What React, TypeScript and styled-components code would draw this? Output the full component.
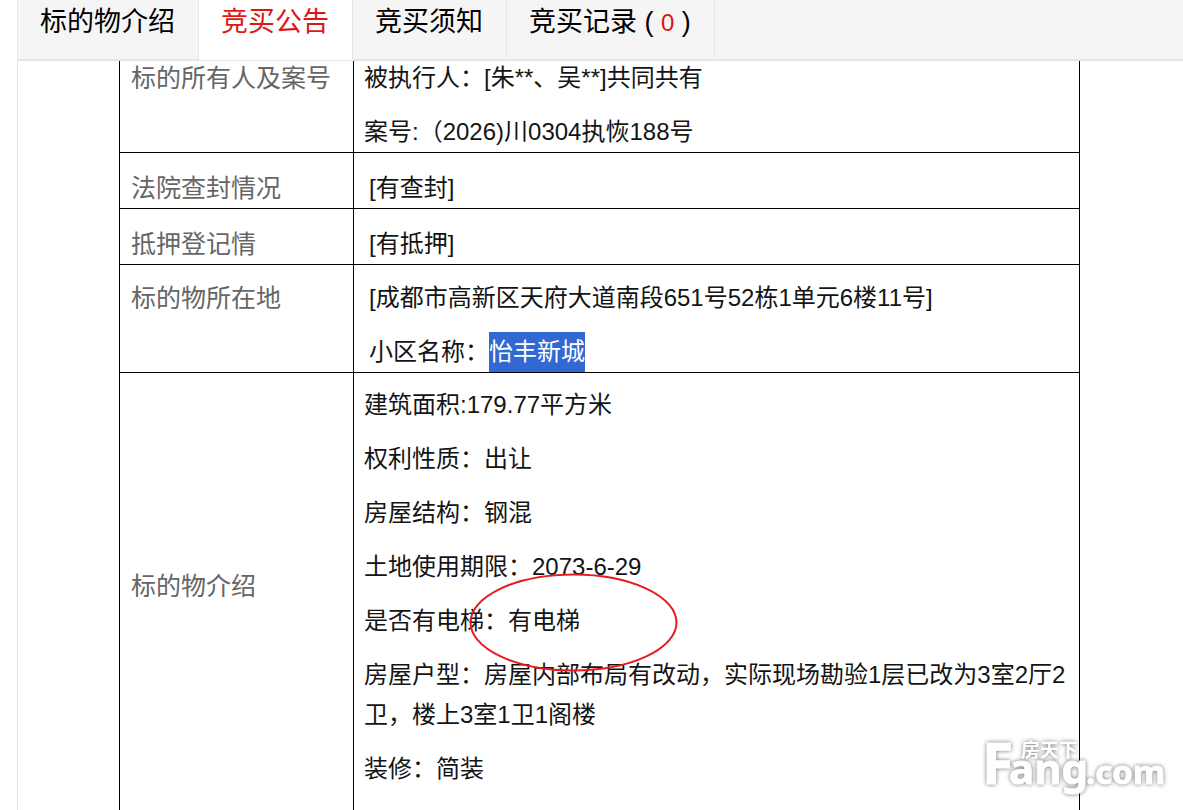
import React, { useState } from "react";
import styled, { createGlobalStyle, css } from "styled-components";

const sans = '"Liberation Sans", "Noto Sans CJK SC", sans-serif';
const cjk = '"Noto Sans CJK SC", sans-serif';

const GlobalStyle = createGlobalStyle`
  *, *::before, *::after { box-sizing: border-box; }
  body { margin: 0; background: #fff; font-family: ${sans}; }
`;

const Page = styled.div`
  position: relative;
  display: flex;
  flex-direction: column;
  height: 100vh;
  padding-left: 17px;
  overflow: hidden;
`;

const TabBar = styled.div`
  display: flex;
  flex: none;
  background: #f5f5f5;
  border-left: 1px solid #e5e5e5;
`;

const Tab = styled.button<{ $active: boolean }>`
  margin: 0;
  padding: 0 23px 19px 22px;
  border: 0;
  border-right: 1px solid #e5e5e5;
  border-bottom: 1px solid ${(p) => (p.$active ? "#fff" : "#e5e5e5")};
  background: ${(p) => (p.$active ? "#fff" : "#f5f5f5")};
  color: ${(p) => (p.$active ? "#dd1712" : "#000")};
  font-family: ${cjk};
  font-size: 27px;
  line-height: 40px;
  white-space: pre;
  cursor: pointer;
`;

const TabFiller = styled.div`
  flex: 1;
  border-bottom: 1px solid #e5e5e5;
`;

const Tally = styled.span`
  font-family: ${sans};
  line-height: 1;
`;

const Count = styled.span`
  color: #dd1712;
  font-size: 24px;
`;

const Content = styled.main`
  flex: 1;
  min-height: 0;
  overflow: hidden;
  border-top: 1px solid #e5e5e5;
  border-left: 1px solid #e5e5e5;
`;

const NoticeTable = styled.table`
  width: calc(100% - 204px);
  margin: -3px 103px 0 101px;
  table-layout: fixed;
  border-collapse: separate;
  border-spacing: 0;
  border-left: 1px solid #000;
`;

const cell = css`
  border-right: 1px solid #000;
  border-bottom: 1px solid #000;
  line-height: 40px;
  text-align: left;
  font-weight: 400;
`;

const LabelCell = styled.th<{ $top: number; $middle?: boolean }>`
  ${cell}
  width: 234px;
  padding: ${(p) => p.$top}px 0 ${(p) => (p.$middle ? 56 : 0)}px 11px;
  color: #666;
  font-size: 25px;
  vertical-align: ${(p) => (p.$middle ? "middle" : "top")};
`;

const ValueCell = styled.td<{ $top: number; $indent?: boolean }>`
  ${cell}
  padding: ${(p) => p.$top}px 10px 0 ${(p) => (p.$indent ? 15 : 10)}px;
  color: #141414;
  font-size: 24px;
  vertical-align: top;
`;

const Line = styled.p`
  position: relative;
  margin: 0;
  & + & { margin-top: 14px; }
`;

const Selected = styled.mark`
  display: inline-block;
  background: #3367d1;
  color: #fff;
`;

const Circle = styled.svg`
  position: absolute;
  z-index: 1;
  left: 105px;
  top: -28px;
  width: 209px;
  height: 99px;
  pointer-events: none;
`;

const Watermark = styled.svg`
  position: absolute;
  z-index: 2;
  right: 8px;
  bottom: 4px;
  width: 200px;
  height: 76px;
  pointer-events: none;
  filter: drop-shadow(0 0 2px rgba(0, 0, 0, 0.55));
`;

const tabs = ["标的物介绍", "竞买公告", "竞买须知", "竞买记录"];

type Row = {
  label: string;
  top: number;
  middle?: boolean;
  indent?: boolean;
  lines: React.ReactNode[];
};

const rows: Row[] = [
  {
    label: "标的所有人及案号",
    top: 0,
    lines: ["被执行人：[朱**、吴**]共同共有", "案号:（2026)川0304执恢188号"],
  },
  { label: "法院查封情况", top: 15, indent: true, lines: ["[有查封]"] },
  { label: "抵押登记情", top: 15, indent: true, lines: ["[有抵押]"] },
  {
    label: "标的物所在地",
    top: 13,
    indent: true,
    lines: [
      "[成都市高新区天府大道南段651号52栋1单元6楼11号]",
      <>小区名称：<Selected>怡丰新城</Selected></>,
    ],
  },
  {
    label: "标的物介绍",
    top: 12,
    middle: true,
    lines: [
      "建筑面积:179.77平方米",
      "权利性质：出让",
      "房屋结构：钢混",
      "土地使用期限：2073-6-29",
      <>
        是否有电梯：有电梯
        <Circle viewBox="0 0 209 99" aria-hidden="true">
          <ellipse cx="104.5" cy="49.5" rx="103" ry="48" fill="none" stroke="#e8191f" strokeWidth="2" />
        </Circle>
      </>,
      "房屋户型：房屋内部布局有改动，实际现场勘验1层已改为3室2厅2卫，楼上3室1卫1阁楼",
      "装修：简装",
      "所在楼： 共楼层",
    ],
  },
];

export default function App() {
  const [active, setActive] = useState(1);
  return (
    <Page>
      <GlobalStyle />
      <TabBar role="tablist">
        {tabs.map((name, i) => (
          <Tab key={name} role="tab" aria-selected={i === active} $active={i === active} onClick={() => setActive(i)}>
            {name}
            {i === 3 && <Tally> ( <Count>0</Count> )</Tally>}
          </Tab>
        ))}
        <TabFiller />
      </TabBar>
      <Content>
        <NoticeTable>
          <tbody>
            {rows.map((row) => (
              <tr key={row.label}>
                <LabelCell scope="row" $top={row.top} $middle={row.middle}>{row.label}</LabelCell>
                <ValueCell $top={row.top} $indent={row.indent}>
                  {row.lines.map((line, i) => <Line key={i}>{line}</Line>)}
                </ValueCell>
              </tr>
            ))}
          </tbody>
        </NoticeTable>
      </Content>
      <Watermark viewBox="0 0 200 76" role="img" aria-label="房天下 Fang.com">
        <text y="54" fill="#fff" stroke="#fff" strokeWidth="1" fontFamily="Noto Sans, sans-serif" fontWeight="700">
          <tspan x="7" fontSize="57">F</tspan>
          <tspan x="34" fontSize="42">ang</tspan>
          <tspan x="111" fontSize="33">.com</tspan>
        </text>
        <text x="46" y="27" fill="#fff" fontFamily="Noto Sans CJK SC, sans-serif" fontWeight="700" fontSize="19">房天下</text>
      </Watermark>
    </Page>
  );
}
